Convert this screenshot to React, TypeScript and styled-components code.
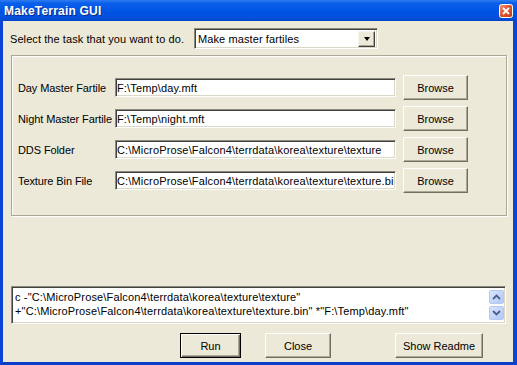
import React from "react";
import styled, { createGlobalStyle, css } from "styled-components";

const GlobalStyle = createGlobalStyle`
  html, body {
    margin: 0;
    padding: 0;
    background: #ece9d8;
  }
  body {
    font-family: "Liberation Sans", Arial, sans-serif;
    font-size: 11px;
    color: #000;
  }
`;

const Window = styled.div`
  width: 517px;
  height: 365px;
  display: flex;
  flex-direction: column;
  box-sizing: border-box;
  overflow: hidden;
`;

const TitleBar = styled.div`
  height: 21px;
  flex: none;
  display: flex;
  align-items: center;
  justify-content: space-between;
  padding: 0 4px 0 4px;
  background: linear-gradient(
    #2f7df2 0%,
    #0a5fea 15%,
    #0055e5 50%,
    #0050dc 85%,
    #0046c8 100%
  );
`;

const Title = styled.span`
  color: #fff;
  font-weight: bold;
  font-size: 12px;
  letter-spacing: 0.2px;
  text-shadow: 1px 1px 0 #0a2a8a;
`;

const CloseBox = styled.div`
  width: 14px;
  height: 14px;
  display: flex;
  margin-top: 1px;
`;

const Body = styled.div`
  flex: 1;
  display: flex;
  flex-direction: column;
  background: #ece9d8;
  border-left: 3px solid #0a45d8;
  border-right: 4px solid #0a45d8;
  border-bottom: 3px solid #0a3dc8;
  padding: 7px 6px 4px 8px;
  min-height: 0;
`;

const SelectRow = styled.div`
  display: flex;
  align-items: center;
  height: 21px;
`;

const Prompt = styled.span`
  width: 184px;
  margin-left: -1px;
  letter-spacing: 0.08px;
`;

const sunken = css`
  box-sizing: border-box;
  background: #fff;
  border: 1px solid;
  border-color: #8d8a7e #fff #fff #8d8a7e;
  box-shadow: inset 1px 1px 0 #404040, inset -1px -1px 0 #dcd8c8;
`;

const Combo = styled.div`
  ${sunken};
  width: 184px;
  height: 21px;
  display: flex;
  align-items: center;
  justify-content: space-between;
  padding: 2px 2px 2px 3px;
  font-size: 11px;
  letter-spacing: 0.1px;
`;

const ComboArrow = styled.div`
  width: 17px;
  height: 16px;
  box-sizing: border-box;
  background: #ece9d8;
  border: 1px solid;
  border-color: #f5f4ee #404040 #404040 #f5f4ee;
  box-shadow: inset -1px -1px 0 #aca899;
  display: flex;
  align-items: center;
  justify-content: center;
  &::after {
    content: "";
    border-left: 3.5px solid transparent;
    border-right: 3.5px solid transparent;
    border-top: 4px solid #000;
  }
`;

const Group = styled.div`
  margin-top: 6px;
  height: 161px;
  box-sizing: border-box;
  border: 1px solid #aca899;
  box-shadow: inset 1px 1px 0 #fff, 1px 1px 0 #fff;
  padding: 16px 0 0 6px;
  display: grid;
  grid-template-columns: 97px 288px 65px;
  grid-auto-rows: 31px;
  align-content: start;
  align-items: center;
`;

const FieldLabel = styled.span`
  white-space: nowrap;
  letter-spacing: -0.1px;
`;

const PathInput = styled.input`
  ${sunken};
  height: 19px;
  width: 281px;
  margin: 0;
  padding: 0 1px;
  font-family: "Liberation Sans", Arial, sans-serif;
  font-size: 11px;
  letter-spacing: 0.15px;
  color: #000;
  outline: none;
`;

const Button = styled.button<{ $primary?: boolean; $w: number; $ml?: number }>`
  width: ${({ $w }) => $w}px;
  height: 25px;
  margin: 0 0 0 ${({ $ml }) => $ml ?? 0}px;
  padding: 0;
  box-sizing: border-box;
  background: #ece9d8;
  font-family: "Liberation Sans", Arial, sans-serif;
  font-size: 11px;
  color: #000;
  border: 1px solid;
  border-color: #fff #716f64 #716f64 #fff;
  box-shadow: inset -1px -1px 0 #aca899;
  ${({ $primary }) =>
    $primary &&
    css`
      border-color: #000;
      box-shadow: inset 1px 1px 0 #fff, inset -1px -1px 0 #716f64,
        inset -2px -2px 0 #aca899;
    `}
`;

const Output = styled.div`
  ${sunken};
  margin-top: auto;
  height: 38px;
  margin-right: 1px;
  display: flex;
  padding: 2px 1px 2px 3px;
`;

const OutputText = styled.div`
  flex: 1;
  line-height: 14px;
  padding-top: 1px;
  letter-spacing: 0.15px;
  white-space: pre;
  overflow: hidden;
`;

const ScrollBar = styled.div`
  width: 15px;
  display: flex;
  flex-direction: column;
  justify-content: space-between;
  background: #fcfcfa;
  padding: 1px 0;
`;

const ScrollBtn = styled.div`
  width: 15px;
  height: 14px;
  box-sizing: border-box;
  border: 1px solid #b4c8f6;
  border-radius: 2px;
  background: linear-gradient(135deg, #d9e5fd 0%, #c1d3fb 60%, #b2c7f7 100%);
  display: flex;
  align-items: center;
  justify-content: center;
`;

const ButtonRow = styled.div`
  margin-top: 9px;
  display: flex;
  padding-left: 169px;
`;

const Chevron = ({ up }: { up?: boolean }) => (
  <svg width="9" height="6" viewBox="0 0 9 6">
    <path
      d={up ? "M1 5 L4.5 1.5 L8 5" : "M1 1 L4.5 4.5 L8 1"}
      fill="none"
      stroke="#4d6185"
      strokeWidth="1.8"
    />
  </svg>
);

const CloseIcon = () => (
  <svg width="14" height="14" viewBox="0 0 14 14">
    <defs>
      <linearGradient id="cg" x1="0" y1="0" x2="1" y2="1">
        <stop offset="0" stopColor="#f29a7a" />
        <stop offset="0.45" stopColor="#e2582f" />
        <stop offset="1" stopColor="#c0391a" />
      </linearGradient>
    </defs>
    <rect x="0.5" y="0.5" width="13" height="13" rx="2" fill="url(#cg)" stroke="#fff" />
    <path d="M4 4 L10 10 M10 4 L4 10" stroke="#fff" strokeWidth="1.8" />
  </svg>
);

const fields = [
  { label: "Day Master Fartile", value: "F:\\Temp\\day.mft" },
  { label: "Night Master Fartile", value: "F:\\Temp\\night.mft" },
  { label: "DDS Folder", value: "C:\\MicroProse\\Falcon4\\terrdata\\korea\\texture\\texture" },
  { label: "Texture Bin File", value: "C:\\MicroProse\\Falcon4\\terrdata\\korea\\texture\\texture.bin" },
];

const command =
  'c -"C:\\MicroProse\\Falcon4\\terrdata\\korea\\texture\\texture"\n' +
  '+"C:\\MicroProse\\Falcon4\\terrdata\\korea\\texture\\texture.bin" *"F:\\Temp\\day.mft"';

const App = () => {
  return (
    <>
      <GlobalStyle />
      <Window>
        <TitleBar>
          <Title>MakeTerrain GUI</Title>
          <CloseBox>
            <CloseIcon />
          </CloseBox>
        </TitleBar>
        <Body>
          <SelectRow>
            <Prompt>Select the task that you want to do.</Prompt>
            <Combo>
              <span>Make master fartiles</span>
              <ComboArrow />
            </Combo>
          </SelectRow>

          <Group>
            {fields.map((f) => (
              <React.Fragment key={f.label}>
                <FieldLabel>{f.label}</FieldLabel>
                <PathInput readOnly value={f.value} />
                <Button $w={65}>Browse</Button>
              </React.Fragment>
            ))}
          </Group>

          <Output>
            <OutputText>{command}</OutputText>
            <ScrollBar>
              <ScrollBtn>
                <Chevron up />
              </ScrollBtn>
              <ScrollBtn>
                <Chevron />
              </ScrollBtn>
            </ScrollBar>
          </Output>

          <ButtonRow>
            <Button $primary $w={61}>
              Run
            </Button>
            <Button $w={66} $ml={24}>
              Close
            </Button>
            <Button $w={88} $ml={64}>
              Show Readme
            </Button>
          </ButtonRow>
        </Body>
      </Window>
    </>
  );
};

export default App;
